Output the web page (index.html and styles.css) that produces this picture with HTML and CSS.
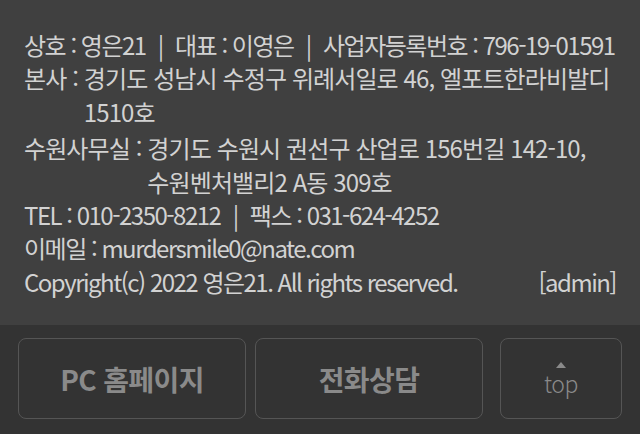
FILE: index.html
```html
<!DOCTYPE html>
<html lang="ko">
<head>
  <meta charset="UTF-8">
  <title>영은21</title>
  <link rel="stylesheet" href="styles.css">
</head>
<body>
  <div class="footer-info">
    <p class="row">상호 : 영은21 <span class="bar">|</span> 대표 : 이영은 <span class="bar">|</span> 사업자등록번호 : 796-19-01591</p>
    <p class="row hang"><span class="label">본사 :&nbsp;</span><span>경기도 성남시 수정구 위례서일로 46, 엘포트한라비발디 1510호</span></p>
    <p class="row hang office"><span class="label">수원사무실 :&nbsp;</span><span>경기도 수원시 권선구 산업로 156번길 142-10, 수원벤처밸리2 A동 309호</span></p>
    <p class="row">TEL : 010-2350-8212 <span class="bar">|</span> 팩스 : 031-624-4252</p>
    <p class="row">이메일 : murdersmile0@nate.com</p>
    <p class="row copy"><span>Copyright(c) 2022 영은21. All rights reserved.</span><span>[admin]</span></p>
  </div>

  <div class="quick-bar">
    <a class="quick-btn wide">PC 홈페이지</a>
    <a class="quick-btn wide">전화상담</a>
    <a class="quick-btn top-btn"><span class="arrow"></span>top</a>
  </div>
</body>
</html>
```

FILE: styles.css
```css
body {
  margin: 0;
  width: 640px;
  height: 434px;
  overflow: hidden;
  background: #333333;
  font-family: "Noto Sans CJK KR", "Noto Sans", sans-serif;
}

.footer-info {
  background: #404040;
  color: #d2d2d2;
  padding: 28px 24px 27px;
  font-size: 24px;
  letter-spacing: -1.5px;
  line-height: 33.4px;
  word-break: keep-all;
}

.row {
  margin: 0;
}

.bar {
  display: inline-block;
  margin: 0 7px;
}

.hang {
  display: flex;
  letter-spacing: -0.9px;
}

.hang .label {
  flex: none;
  white-space: pre;
}

.office {
  margin-top: 3px;
}

.copy {
  display: flex;
  justify-content: space-between;
}

.quick-bar {
  display: flex;
  padding: 13px 18px 14px;
  gap: 9px;
}

.quick-btn {
  display: flex;
  flex-direction: column;
  align-items: center;
  justify-content: center;
  height: 79px;
  border: 1px solid #555;
  border-radius: 8px;
  color: #8a8a8a;
  box-sizing: content-box;
}

.wide {
  width: 226px;
  font-size: 28px;
  font-weight: bold;
  letter-spacing: -0.6px;
}

.top-btn {
  width: 120px;
  margin-left: 8px;
  font-size: 23px;
  font-weight: 300;
  line-height: 24px;
  letter-spacing: -0.5px;
}

.arrow {
  width: 0;
  height: 0;
  border-left: 5px solid transparent;
  border-right: 5px solid transparent;
  border-bottom: 6px solid #8a8a8a;
  margin-bottom: 3px;
}
```
